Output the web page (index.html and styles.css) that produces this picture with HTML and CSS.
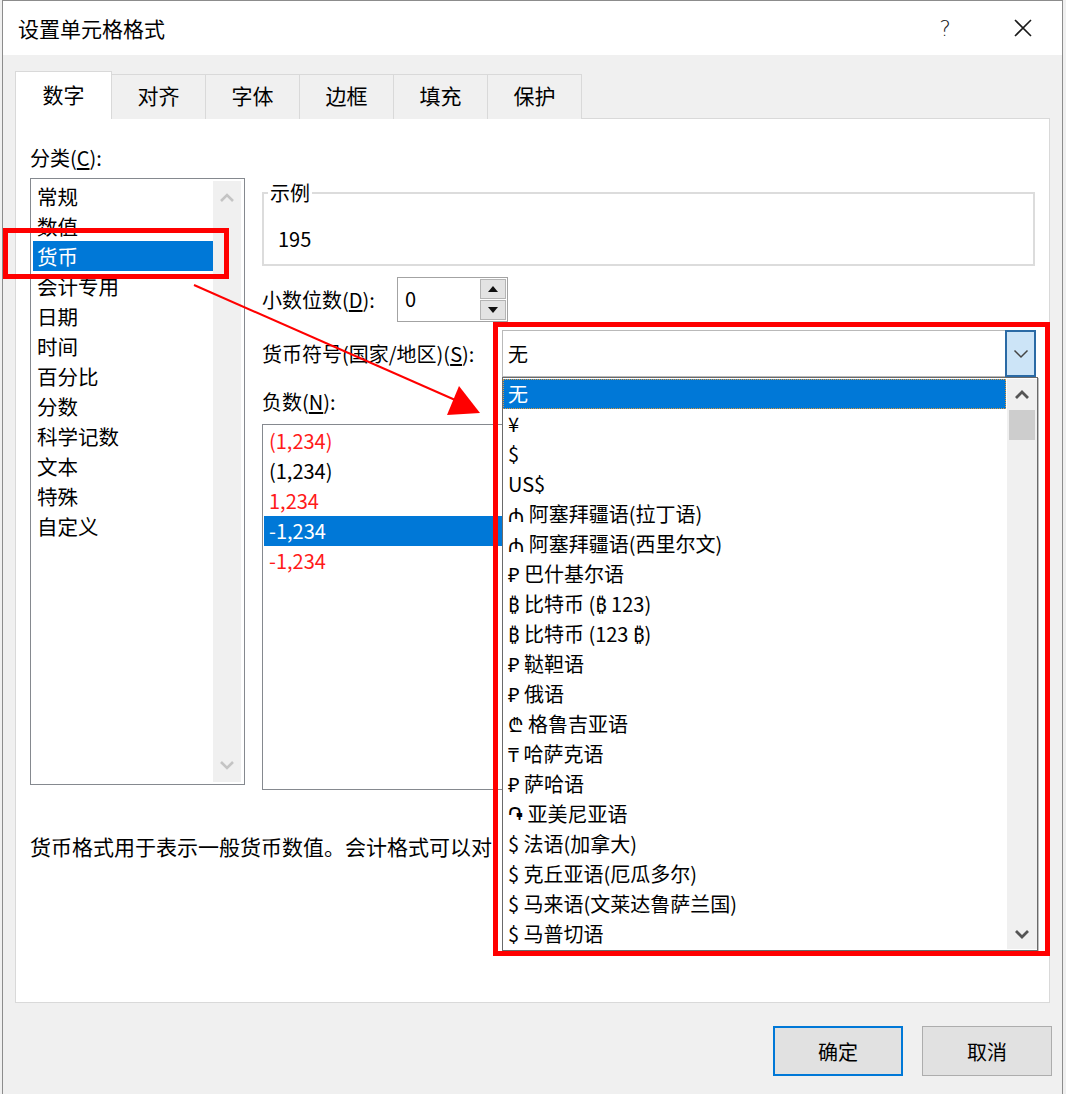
FILE: index.html
```html
<!DOCTYPE html>
<html lang="zh-CN">
<head>
<meta charset="utf-8">
<title>设置单元格格式</title>
<link rel="stylesheet" href="styles.css">
</head>
<body>
<div class="window">
  <div class="titlebar">
    <span class="title">设置单元格格式</span>
    <span class="tbtn help">?</span>
    <span class="tbtn close">
      <svg width="20" height="20" viewBox="0 0 20 20"><path d="M2 2 L18 18 M18 2 L2 18" stroke="#1a1a1a" stroke-width="1.6" fill="none"/></svg>
    </span>
  </div>
  <div class="dlgbody">
    <div class="tabs">
      <div class="tab active">数字</div>
      <div class="tab">对齐</div>
      <div class="tab">字体</div>
      <div class="tab">边框</div>
      <div class="tab">填充</div>
      <div class="tab">保护</div>
    </div>
    <div class="panel">
      <div class="main">
        <div class="left">
          <div class="label">分类(<u>C</u>):</div>
          <div class="listbox cat">
            <ul class="items">
              <li>常规</li>
              <li>数值</li>
              <li class="sel">货币</li>
              <li>会计专用</li>
              <li>日期</li>
              <li>时间</li>
              <li>百分比</li>
              <li>分数</li>
              <li>科学记数</li>
              <li>文本</li>
              <li>特殊</li>
              <li>自定义</li>
            </ul>
            <div class="vscroll off">
              <span class="sbtn"><svg width="16" height="10" viewBox="0 0 16 10"><path d="M2 8 L8 2 L14 8" stroke="#c4c4c4" stroke-width="2.6" fill="none"/></svg></span>
              <span class="track"></span>
              <span class="sbtn"><svg width="16" height="10" viewBox="0 0 16 10"><path d="M2 2 L8 8 L14 2" stroke="#c4c4c4" stroke-width="2.6" fill="none"/></svg></span>
            </div>
          </div>
        </div>
        <div class="right">
          <fieldset class="sample">
            <legend>示例</legend>
            <div class="sample-value">195</div>
          </fieldset>
          <div class="row decimals">
            <span class="lbl">小数位数(<u>D</u>):</span>
            <div class="spin">
              <span class="spin-val">0</span>
              <div class="spin-btns">
                <span class="sp"><svg width="10" height="6" viewBox="0 0 10 6"><path d="M0 6 L5 0 L10 6 Z" fill="#111"/></svg></span>
                <span class="sp"><svg width="10" height="6" viewBox="0 0 10 6"><path d="M0 0 L5 6 L10 0 Z" fill="#111"/></svg></span>
              </div>
            </div>
          </div>
          <div class="row currency">
            <span class="lbl">货币符号(国家/地区)(<u>S</u>):</span>
            <div class="combo">
              <span class="combo-val">无</span>
              <span class="combo-btn"><svg width="16" height="10" viewBox="0 0 16 10"><path d="M1.5 1.5 L8 8 L14.5 1.5" stroke="#444" stroke-width="1.5" fill="none"/></svg></span>
              <div class="dropdown">
                <ul class="ditems">
                  <li class="sel">无</li>
                  <li>¥</li>
                  <li>$</li>
                  <li>US$</li>
                  <li>₼ 阿塞拜疆语(拉丁语)</li>
                  <li>₼ 阿塞拜疆语(西里尔文)</li>
                  <li>₽ 巴什基尔语</li>
                  <li>₿ 比特币 (₿ 123)</li>
                  <li>₿ 比特币 (123 ₿)</li>
                  <li>₽ 鞑靼语</li>
                  <li>₽ 俄语</li>
                  <li>₾ 格鲁吉亚语</li>
                  <li>₸ 哈萨克语</li>
                  <li>₽ 萨哈语</li>
                  <li>֏ 亚美尼亚语</li>
                  <li>$ 法语(加拿大)</li>
                  <li>$ 克丘亚语(厄瓜多尔)</li>
                  <li>$ 马来语(文莱达鲁萨兰国)</li>
                  <li>$ 马普切语</li>
                </ul>
                <div class="vscroll on">
                  <span class="sbtn"><svg width="16" height="10" viewBox="0 0 16 10"><path d="M2 8 L8 2 L14 8" stroke="#555" stroke-width="2.8" fill="none"/></svg></span>
                  <span class="thumb"></span>
                  <span class="track"></span>
                  <span class="sbtn"><svg width="16" height="10" viewBox="0 0 16 10"><path d="M2 2 L8 8 L14 2" stroke="#555" stroke-width="2.8" fill="none"/></svg></span>
                </div>
              </div>
            </div>
          </div>
          <div class="label neg-label">负数(<u>N</u>):</div>
          <div class="listbox neg">
            <ul class="items">
              <li class="red">(1,234)</li>
              <li>(1,234)</li>
              <li class="red">1,234</li>
              <li class="sel">-1,234</li>
              <li class="red">-1,234</li>
            </ul>
          </div>
        </div>
      </div>
      <p class="desc">货币格式用于表示一般货币数值。会计格式可以对</p>
    </div>
    <div class="buttons">
      <button class="btn primary">确定</button>
      <button class="btn">取消</button>
    </div>
  </div>
</div>
<svg class="annot" width="1066" height="1094" viewBox="0 0 1066 1094">
  <rect x="5.5" y="230.5" width="221" height="46" fill="none" stroke="#ff0000" stroke-width="5"/>
  <rect x="495.5" y="324.5" width="552" height="629" fill="none" stroke="#ff0000" stroke-width="5"/>
  <line x1="194" y1="285" x2="462" y2="403" stroke="#ff0000" stroke-width="2"/>
  <polygon points="480,413 459,386 447,415" fill="#ff0000"/>
</svg>
</body>
</html>
```

FILE: styles.css
```css
* { box-sizing: border-box; }
html, body { margin: 0; padding: 0; }
body {
  position: relative;
  width: 1066px;
  height: 1094px;
  overflow: hidden;
  background: #f0f0f0;
  font-family: "Noto Sans CJK SC", "Noto Sans", "DejaVu Sans", sans-serif;
  font-size: 20px;
  color: #000;
}
ul { list-style: none; margin: 0; padding: 0; }
u { text-decoration: underline; text-underline-offset: 2px; }

.window {
  margin-left: 2px;
  width: 1061px;
  height: 1110px;
  border: 1px solid #8c8c8c;
  background: #f0f0f0;
}

.titlebar {
  height: 54px;
  background: #fff;
  display: flex;
  align-items: center;
  padding: 0 16px 0 15px;
}
.title { flex: 1; font-size: 21px; }
.tbtn { width: 46px; display: flex; justify-content: center; align-items: center; }
.help { font-size: 22px; font-family: "DejaVu Sans", sans-serif; font-weight: 300; color: #222; margin-right: 32px; }

.dlgbody { padding: 16px 12px 0 12px; }

.tabs {
  display: flex;
  align-items: flex-end;
  height: 48px;
  margin-bottom: -1px;
  position: relative;
  z-index: 2;
}
.tab {
  width: 94px;
  height: 45px;
  display: flex;
  align-items: center;
  justify-content: center;
  font-size: 21px;
  border: 1px solid #d9d9d9;
  border-left: none;
  border-bottom: none;
  background: #f0f0f0;
  padding-bottom: 4px;
}
.tab.active {
  width: 97px;
  height: 48px;
  background: #fff;
  border-left: 1px solid #d9d9d9;
  padding-bottom: 3px;
}

.panel {
  height: 885px;
  background: #fff;
  border: 1px solid #d9d9d9;
  padding: 25px 14px 0 14px;
}
.main { display: flex; gap: 17px; }
.left { width: 215px; }
.right { flex: 1; padding-top: 35px; }
.label { line-height: 28px; height: 28px; }

.listbox {
  border: 1px solid #85898f;
  padding: 1px;
  background: #fff;
}
.listbox .items li { height: 30px; line-height: 30px; padding-left: 5px; white-space: nowrap; }
.listbox .items li.sel { background: #0078d7; color: #fff; }
.listbox .items li.red { color: #ff1a1a; }

.cat { margin-top: 6px; height: 607px; display: flex; }
.cat .items { flex: 1; padding-top: 1px; padding-left: 1px; }
.cat .items li { padding-left: 4px; font-size: 20.5px; }

.vscroll { display: flex; flex-direction: column; background: #f0f0f0; }
.vscroll .sbtn { height: 34px; display: flex; align-items: center; justify-content: center; }
.vscroll .track { flex: 1; }
.cat .vscroll { width: 28px; margin: 1px 2px 1px 0; }

.sample {
  margin: 0;
  padding: 0 0 11px 4px;
  border: 2px solid #dcdcdc;
  min-width: 0;
}
.sample legend { padding: 0 2px; line-height: 28px; }
.sample-value { margin-top: 18px; line-height: 28px; padding-left: 10px; }

.row { display: flex; align-items: center; }
.decimals { margin-top: 11px; height: 45px; }
.decimals .lbl { width: 135px; }
.spin {
  width: 111px;
  height: 45px;
  border: 1px solid #a3a3a3;
  background: #fff;
  display: flex;
}
.spin-val { flex: 1; padding-left: 7px; line-height: 41px; }
.spin-btns { width: 27px; display: flex; flex-direction: column; padding: 1px 1px 1px 0; gap: 1px; }
.spin-btns .sp {
  flex: 1;
  background: #e3e3e3;
  border: 1px solid #b4b4b4;
  display: flex;
  align-items: center;
  justify-content: center;
}

.currency { margin-top: 8px; height: 47px; }
.combo {
  position: relative;
  margin-left: auto;
  margin-right: -1px;
  width: 534px;
  height: 47px;
  border: 1px solid #b9b9b9;
  background: #fff;
  display: flex;
}
.combo-val { flex: 1; padding-left: 5px; line-height: 45px; }
.combo-btn {
  width: 31px;
  height: 47px;
  margin: -1px -1px -1px 0;
  border: 2px solid #2a6aa5;
  background: #cce4f7;
  display: flex;
  align-items: center;
  justify-content: center;
}
.dropdown {
  position: absolute;
  top: 46px;
  left: -1px;
  width: 536px;
  height: 574px;
  border: 1px solid #6a6a6a;
  box-shadow: 1px 1px 0 #c0c0c0;
  background: #fff;
  display: flex;
  z-index: 5;
}
.ditems { flex: 1; padding-top: 1px; }
.ditems li { height: 30px; line-height: 30px; padding-left: 5px; white-space: nowrap; }
.ditems li.sel {
  background: #0078d7;
  color: #fff;
  outline: 1px dotted #e39a3c;
  outline-offset: -1px;
}
.dropdown .vscroll { width: 30px; margin: 1px 0 1px 1px; }
.dropdown .vscroll .sbtn { height: 31px; }
.dropdown .thumb { height: 30px; margin: 0 2px; background: #cdcdcd; }

.neg-label { margin-top: 11px; }
.neg { margin-top: 8px; height: 366px; width: 460px; }
.neg .items li { padding-left: 5px; }

.desc {
  margin: 42px 0 0 0;
  width: 464px;
  overflow: hidden;
  line-height: 28px;
  font-size: 21px;
  white-space: nowrap;
}

.buttons {
  display: flex;
  justify-content: flex-end;
  gap: 19px;
  padding-top: 23px;
  margin-right: -2px;
}
.btn {
  width: 130px;
  height: 50px;
  background: #e1e1e1;
  border: 1px solid #adadad;
  font-family: "Noto Sans CJK SC", sans-serif;
  font-size: 20px;
  color: #000;
  padding: 0;
}
.btn.primary { border: 2px solid #0078d7; }

.annot { position: absolute; left: 0; top: 0; pointer-events: none; z-index: 10; }
```
